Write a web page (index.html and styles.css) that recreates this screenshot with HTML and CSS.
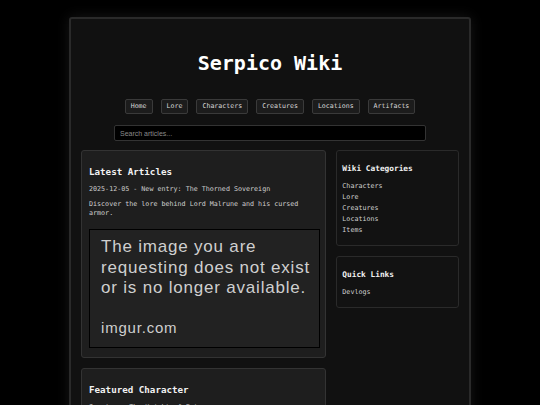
FILE: index.html
```html
<!DOCTYPE html>
<html lang="en">
<head>
  <meta charset="UTF-8" />
  <meta name="viewport" content="width=device-width, initial-scale=1" />
  <title>Serpico Wiki</title>
  <link rel="stylesheet" href="styles.css">
</head>
<body>
  <div class="wrapper">
    <!-- Header -->
    <header class="site-header">
      <h1>Serpico Wiki</h1>
      <nav class="nav">
        <a href="#">Home</a>
        <a href="#">Lore</a>
        <a href="#">Characters</a>
        <a href="#">Creatures</a>
        <a href="#">Locations</a>
        <a href="#">Artifacts</a>
      </nav>
      <input class="search" type="text" placeholder="Search articles...">
    </header>

    <div class="layout">
      <!-- Main column -->
      <main class="main">
        <section class="card">
          <h2>Latest Articles</h2>
          <p class="date">2025-12-05 - New entry: The Thorned Sovereign</p>
          <p>Discover the lore behind Lord Malrune and his cursed armor.</p>
          <div class="missing-img">
            <p>The image you are<br>requesting does not exist<br>or is no longer available.</p>
            <p class="imgur">imgur.com</p>
          </div>
        </section>

        <section class="card">
          <h2>Featured Character</h2>
          <p class="date">Serpico - The Knight of Fate</p>
        </section>
      </main>

      <!-- Sidebar -->
      <aside class="sidebar">
        <section class="side-card">
          <h3>Wiki Categories</h3>
          <ul>
            <li><a href="#">Characters</a></li>
            <li><a href="#">Lore</a></li>
            <li><a href="#">Creatures</a></li>
            <li><a href="#">Locations</a></li>
            <li><a href="#">Items</a></li>
          </ul>
        </section>
        <section class="side-card">
          <h3>Quick Links</h3>
          <ul>
            <li><a href="#">Devlogs</a></li>
          </ul>
        </section>
      </aside>
    </div>
  </div>
</body>
</html>
```

FILE: styles.css
```css
:root {
  --bg: #000;
  --panel: #111;
  --card: #1e1e1e;
  --border: #333;
  --text: #cfcfcf;
  --heading: #f2f2f2;
}

html {
  background: var(--bg);
}

body {
  margin: 0;
  padding-top: 17px;
  font-family: "DejaVu Sans Mono", "Liberation Mono", monospace;
  color: var(--text);
}

/* Outer glowing panel */
.wrapper {
  width: 402px;
  box-sizing: border-box;
  margin: 0 auto;
  padding: 0 10px 20px;
  background: var(--panel);
  border: 2px solid #2a2a2a;
  border-radius: 3px;
  box-shadow: 0 0 14px rgba(255, 255, 255, 0.09);
}

/* Header */
.site-header {
  display: flex;
  flex-direction: column;
  align-items: center;
  padding-top: 32px;
}

.site-header h1 {
  margin: 0;
  font-size: 20px;
  line-height: 24px;
  color: #fff;
}

.nav {
  display: flex;
  gap: 8px;
  margin-top: 24px;
}

.nav a {
  display: block;
  padding: 2px 5px;
  font-size: 6.6px;
  line-height: 9px;
  color: #d8d8d8;
  text-decoration: none;
  background: #1c1c1c;
  border: 1px solid #3a3a3a;
  border-radius: 2px;
}

.search {
  width: 312px;
  height: 16px;
  box-sizing: border-box;
  margin-top: 11px;
  padding: 0 5px;
  font-family: "Liberation Sans", Arial, sans-serif;
  font-size: 7px;
  color: #ccc;
  background: #000;
  border: 1px solid #333;
  border-radius: 2px;
}

.search::placeholder {
  color: #8a8a8a;
}

/* Two column layout */
.layout {
  display: grid;
  grid-template-columns: 2fr 1fr;
  gap: 10px;
  margin-top: 9px;
}

.main,
.sidebar {
  display: flex;
  flex-direction: column;
  gap: 10px;
}

.card {
  padding: 15px 5px 9px 7px;
  background: var(--card);
  border: 1px solid var(--border);
  border-radius: 3px;
}

.card h2 {
  margin: 0 0 8px;
  font-size: 9.2px;
  line-height: 11px;
  color: var(--heading);
}

.card p {
  margin: 0;
  font-size: 6.7px;
  line-height: 9px;
}

.card .date {
  margin-bottom: 6px;
}

/* Stand-in for the broken imgur picture */
.missing-img {
  margin-top: 11px;
  padding: 7px 4px 9px 11px;
  background: #222;
  border: 1px solid #000;
  font-family: "Liberation Sans", Arial, sans-serif;
  color: #cfcfcf;
}

.card .missing-img p {
  font-size: 17px;
  line-height: 20.5px;
  letter-spacing: 0.8px;
}

.card .missing-img .imgur {
  margin-top: 19px;
  font-size: 15px;
}

/* Sidebar */
.side-card {
  padding: 13px 5px 9px;
  background: #121212;
  border: 1px solid #2a2a2a;
  border-radius: 3px;
}

.side-card h3 {
  margin: 0 0 7px;
  font-size: 7.8px;
  line-height: 10px;
  color: var(--heading);
}

.side-card ul {
  list-style: none;
  margin: 0;
  padding: 0;
}

.side-card li {
  font-size: 6.7px;
  line-height: 11px;
}

.side-card a {
  color: #d0d0d0;
  text-decoration: none;
}
```
